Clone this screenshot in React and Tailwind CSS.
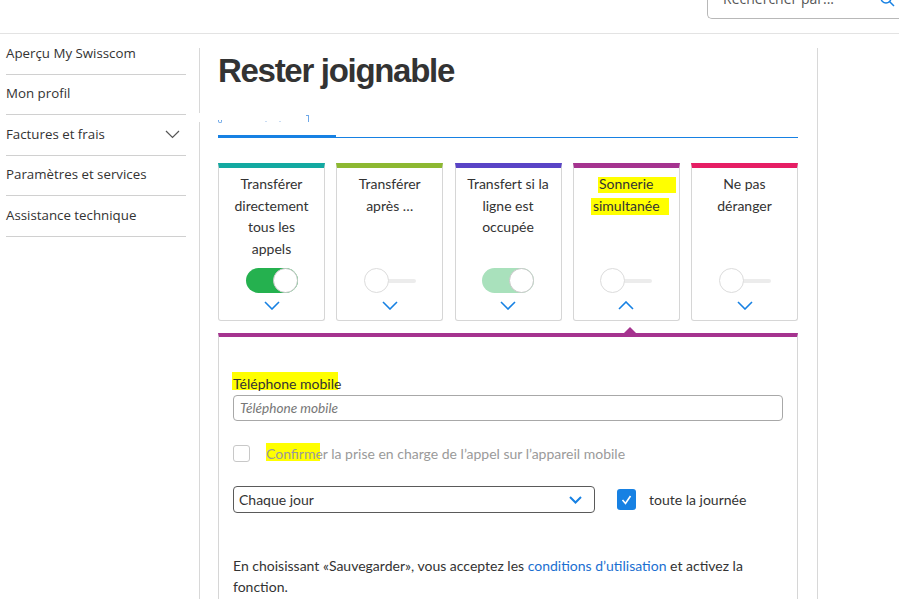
import React from "react";

function ChevronDown({ className = "" }) {
  return (
    <svg width="16" height="9" viewBox="0 0 16 9" className={className}>
      <polyline points="1,1 8,8 15,1" fill="none" stroke="#1781e3" strokeWidth="1.6" />
    </svg>
  );
}
function ChevronUp() {
  return (
    <svg width="16" height="9" viewBox="0 0 16 9">
      <polyline points="1,8 8,1 15,8" fill="none" stroke="#1781e3" strokeWidth="1.6" />
    </svg>
  );
}

function Toggle({ state }) {
  if (state === "off") {
    return (
      <div className="relative w-[52px] h-[25px]">
        <div className="absolute left-[20px] top-[10.5px] w-[32px] h-[4px] rounded-full bg-[#ececec]" />
        <div className="absolute left-0 top-0 w-[25px] h-[25px] rounded-full bg-white border border-[#dcdcdc]" />
      </div>
    );
  }
  const bg = state === "on" ? "bg-[#25b14f]" : "bg-[#a9e1bc]";
  return (
    <div className={`relative w-[52px] h-[25px] rounded-full ${bg}`}>
      <div className="absolute right-0 top-0 w-[25px] h-[25px] rounded-full bg-white border border-[#c8c8c8]" />
    </div>
  );
}

const cards = [
  { color: "border-t-[#13a9a1]", lines: ["Transférer", "directement", "tous les", "appels"], toggle: "on" },
  { color: "border-t-[#8db831]", lines: ["Transférer", "après …"], toggle: "off" },
  { color: "border-t-[#5944c6]", lines: ["Transfert si la", "ligne est", "occupée"], toggle: "light" },
  { color: "border-t-[#a5338f]", lines: ["Sonnerie", "simultanée"], toggle: "off", open: true },
  { color: "border-t-[#e61e64]", lines: ["Ne pas", "déranger"], toggle: "off" },
];

const sideItems = ["Aperçu My Swisscom", "Mon profil", "Factures et frais", "Paramètres et services", "Assistance technique"];

export default function App() {
  return (
    <div className="w-[899px] h-[599px] overflow-hidden bg-white relative text-[#333] font-['Lato',sans-serif]">
      {/* header */}
      <div className="h-[34px] border-b border-[#e3e3e3] flex justify-end">
        <div className="w-[192px] h-[19px] border border-t-0 border-r-0 border-[#b8b8b8] rounded-bl-[5px] relative overflow-hidden">
          <span className="absolute left-[15px] top-[-12px] text-[14px] text-[#555] font-['Open_Sans',sans-serif]">Rechercher par...</span>
          <svg className="absolute left-[172px] top-[-8px]" width="16" height="16" viewBox="0 0 16 16">
            <circle cx="6" cy="6" r="5" fill="none" stroke="#1781e3" strokeWidth="1.5" />
            <line x1="9.5" y1="9.5" x2="14" y2="14" stroke="#1781e3" strokeWidth="1.5" />
          </svg>
        </div>
      </div>

      <div className="flex">
        {/* sidebar */}
        <nav className="ml-[6px] w-[180px] font-['Open_Sans',sans-serif] text-[13.3px] text-[#333]">
          {sideItems.map((t, i) => (
            <div key={t} className="h-[40.5px] border-b border-[#d0d0d0] flex items-center justify-between">
              <span>{t}</span>
              {i === 2 && (
                <svg width="15" height="9" viewBox="0 0 15 9" className="mr-[6px]">
                  <polyline points="1,1 7.5,7.5 14,1" fill="none" stroke="#555" strokeWidth="1.2" />
                </svg>
              )}
            </div>
          ))}
        </nav>

        {/* main */}
        <main className="ml-[13px] mt-[14px] w-[619px] h-[551px] border-l border-r border-[#d8d8d8] pl-[18px] pr-[19px]">
          <h1 className="mt-[3px] text-[33px] leading-[40px] font-bold tracking-[-1.3px] text-[#333] font-['Liberation_Sans',sans-serif]">
            Rester joignable
          </h1>

          {/* tabs */}
          <div className="relative h-[47px] border-b border-[#1781e3]">
            <div className="absolute left-[-19px] top-[22px] w-[2px] h-[9px] bg-white" />
            <div className="absolute left-0 bottom-[-1px] w-[118px] h-[3px] bg-[#1781e3]" />
            <span className="absolute left-0 top-[29px] w-[4px] h-[3px] border-b border-l border-r border-[#6ea8e8] rounded-b-full" />
            <span className="absolute left-[47px] top-[30px] w-[2px] h-[1px] bg-[#c9dcf3]" />
            <span className="absolute left-[61px] top-[30px] w-[2px] h-[1px] bg-[#c9dcf3]" />
            <span className="absolute left-[90px] top-[24px] w-[1px] h-[7px] bg-[#6ea8e8]" />
            <span className="absolute left-[88px] top-[24px] w-[2px] h-[1px] bg-[#6ea8e8]" />
          </div>

          {/* cards */}
          <div className="mt-[25px] grid grid-cols-5 gap-x-[11.25px]">
            {cards.map((c, i) => (
              <div key={i} className={`relative h-[158px] border border-[#d6d6d6] border-t-[5px] ${c.color} rounded-b-[3px] flex flex-col items-center`}>
                {c.open && (
                  <>
                    <div className="absolute left-[24px] top-[9px] w-[78px] h-[16px] bg-[#ffff00]" />
                    <div className="absolute left-[17px] top-[30px] w-[78px] h-[17px] bg-[#ffff00]" />
                  </>
                )}
                <div className="relative z-10 pt-[5px] text-[14px] leading-[21.5px] text-center whitespace-nowrap text-[#333]">
                  {c.lines.map((l, j) => (
                    <div key={j}>{l}</div>
                  ))}
                </div>
                <div className="mt-auto flex flex-col items-center pb-[10px]">
                  <Toggle state={c.toggle} />
                  <div className="mt-[8px] h-[9px] flex items-center">{c.open ? <ChevronUp /> : <ChevronDown />}</div>
                </div>
              </div>
            ))}
          </div>

          {/* detail panel */}
          <div className="relative mt-[12px] h-[300px] border-t-[4px] border-t-[#a5338f] border-l border-r border-[#d6d6d6] px-[14px]">
            <div className="absolute left-[405px] top-[-10px] w-0 h-0 border-l-[6px] border-r-[6px] border-b-[6px] border-l-transparent border-r-transparent border-b-[#a5338f]" />
            <div className="absolute left-[13px] top-[35px] w-[106px] h-[18px] bg-[#ffff00]" />
            <div className="absolute left-[47px] top-[106px] w-[54px] h-[18px] bg-[#ffff00]" />

            <div className="relative pt-[38px] text-[14px] leading-[18px] text-[#333]">Téléphone mobile</div>
            <div className="mt-[2px] h-[26px] border border-[#a8a8a8] rounded-[4px] flex items-center px-[6px] text-[13.6px] italic text-[#777]">
              Téléphone mobile
            </div>

            <div className="relative mt-[24px] flex items-center h-[17px]">
              <div className="w-[17px] h-[17px] border border-[#c8c8c8] rounded-[3px] bg-white" />
              <span className="ml-[16px] text-[14px] text-[#9a9a9a]">
                Confirmer la prise en charge de l’appel sur l’appareil mobile
              </span>
            </div>

            <div className="mt-[24px] flex items-center">
              <div className="w-[362px] h-[27px] border border-[#5a5a5a] rounded-[4px] flex items-center justify-between pl-[5px] pr-[12px] text-[14px] text-[#333]">
                <span>Chaque jour</span>
                <svg width="13" height="8" viewBox="0 0 13 8">
                  <polyline points="1,1 6.5,6.5 12,1" fill="none" stroke="#1781e3" strokeWidth="2" />
                </svg>
              </div>
              <div className="ml-[22px] w-[19px] h-[21px] rounded-[3px] bg-[#1781e3] flex items-center justify-center">
                <svg width="11" height="10" viewBox="0 0 11 10">
                  <polyline points="1.5,5 4.5,8.5 9.5,1" fill="none" stroke="#fff" strokeWidth="1.6" />
                </svg>
              </div>
              <span className="ml-[13px] text-[14px] text-[#333]">toute la journée</span>
            </div>

            <p className="mt-[42px] text-[14px] leading-[21px] text-[#333]">
              En choisissant «Sauvegarder», vous acceptez les{" "}
              <span className="text-[#1a6fd1]">conditions d’utilisation</span> et activez la
              <br />
              fonction.
            </p>
          </div>
        </main>
      </div>
    </div>
  );
}
